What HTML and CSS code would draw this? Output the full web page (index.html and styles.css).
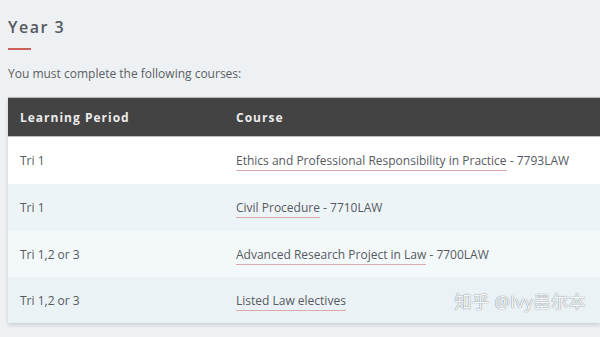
FILE: index.html
```html
<!DOCTYPE html>
<html>
<head>
<meta charset="utf-8">
<link rel="stylesheet" href="styles.css">
</head>
<body>
<div class="page">
  <h2 class="title">Year 3</h2>
  <div class="rule"></div>
  <p class="intro">You must complete the following courses:</p>
  <div class="table">
    <div class="row head">
      <div class="c1">Learning Period</div>
      <div class="c2">Course</div>
    </div>
    <div class="row r1">
      <div class="c1">Tri 1</div>
      <div class="c2"><span class="link">Ethics and Professional Responsibility in Practice</span> - 7793LAW</div>
    </div>
    <div class="row r2">
      <div class="c1">Tri 1</div>
      <div class="c2"><span class="link">Civil Procedure</span> - 7710LAW</div>
    </div>
    <div class="row r3">
      <div class="c1">Tri 1,2 or 3</div>
      <div class="c2"><span class="link">Advanced Research Project in Law</span> - 7700LAW</div>
    </div>
    <div class="row r4">
      <div class="c1">Tri 1,2 or 3</div>
      <div class="c2"><span class="link">Listed Law electives</span></div>
      <div class="mark">知乎 @Ivy墨尔本</div>
    </div>
  </div>
</div>
</body>
</html>
```
FILE: styles.css
```css
html, body {
  margin: 0;
  padding: 0;
  background: #eef1f4;
}
body {
  font-family: "Open Sans", "Noto Sans CJK SC", sans-serif;
  color: #555a5f;
  width: 600px;
  height: 337px;
  overflow: hidden;
}
.page {
  padding: 16px 0 0 8px;
}
.title {
  margin: 0;
  font-size: 16px;
  font-weight: 600;
  letter-spacing: 1.5px;
  line-height: 22px;
  color: #56595d;
}
.rule {
  width: 23px;
  height: 2px;
  background: #c9605c;
  margin-top: 10px;
}
.intro {
  margin: 16px 0 0 0;
  font-size: 12px;
  line-height: 16px;
  color: #5a5e62;
}
.table {
  margin-top: 15px;
  box-shadow: 0 2px 4px rgba(0,0,0,0.15);
}
.row {
  display: flex;
  align-items: center;
  height: 46px;
  font-size: 12px;
  position: relative;
}
.row .c1 {
  width: 216px;
  padding-left: 12px;
}
.row .c2 {
  flex: 1;
}
.head {
  height: 40px;
  background: #434343;
  color: #ececec;
  font-weight: 700;
  letter-spacing: 1px;
  border-top: 1px solid #bdbdbd;
  border-bottom: 1px solid #bdbdbd;
  box-sizing: border-box;
}
.r1 { background: #ffffff; height: 47px; }
.r2 { background: #edf4f7; height: 47px; }
.r3 { background: #f3f8fa; }
.r4 { background: #ebf2f5; }
.link {
  border-bottom: 1px solid #dca9ab;
  padding-bottom: 1px;
}
.mark {
  position: absolute;
  right: 14px;
  top: 11px;
  font-size: 17px;
  color: rgba(255,255,255,0.95);
  text-shadow: 0 0 1px rgba(110,120,130,0.9), 0 0 1px rgba(110,120,130,0.6);
  letter-spacing: 0.5px;
}
```
